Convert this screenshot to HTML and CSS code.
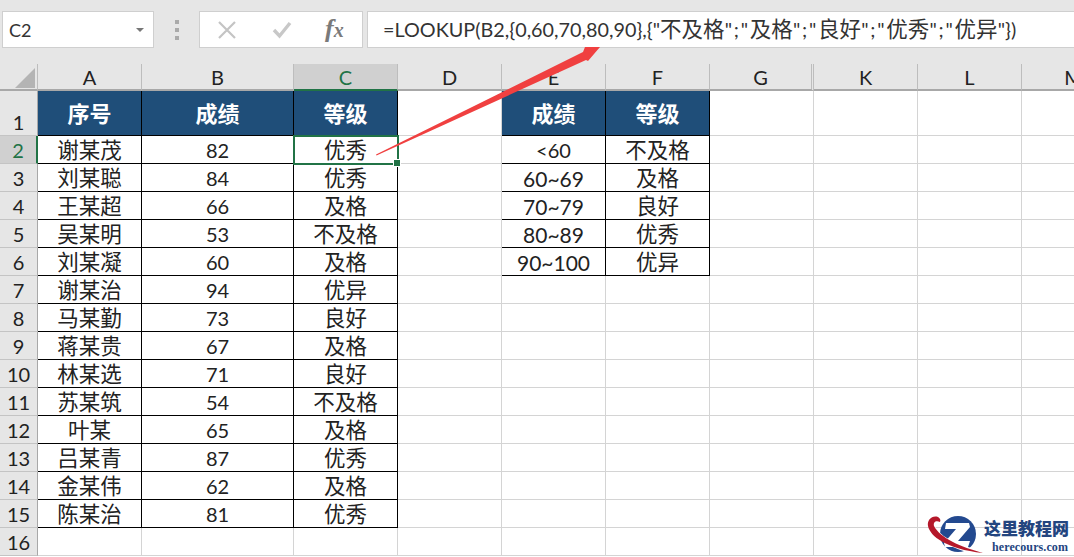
FILE: index.html
```html
<!DOCTYPE html>
<html lang="zh">
<head>
<meta charset="utf-8">
<title>LOOKUP</title>
<link rel="stylesheet" href="styles.css">
</head>
<body>
<div class="bar">
  <div class="namebox"><span>C2</span><i class="caret"></i></div>
  <div class="grip"><i></i><i></i><i></i></div>
  <div class="fx">
    <svg class="ic" width="18" height="18" viewBox="0 0 18 18"><path d="M1 1 L17 17 M17 1 L1 17" stroke="#c4c4c4" stroke-width="2.2" fill="none"/></svg>
    <svg class="ic" width="20" height="18" viewBox="0 0 20 18"><path d="M2 9 L7.5 15 L18 2" stroke="#c8c8c8" stroke-width="3.4" fill="none"/></svg>
    <span class="fxt">f<span class="fxx">x</span></span>
  </div>
  <div class="formula">=LOOKUP(B2,{0,60,70,80,90},{"<span class="cj">不及格</span><span class="sep">";"</span><span class="cj">及格</span><span class="sep">";"</span><span class="cj">良好</span><span class="sep">";"</span><span class="cj">优秀</span><span class="sep">";"</span><span class="cj">优异</span>"})</div>
</div>
<table class="sheet">
  <colgroup><col class="w0"><col class="w1"><col class="w2"><col class="w1"><col class="w1"><col class="w1"><col class="w1"><col class="w1"><col class="w1"><col class="w1"><col class="w1"></colgroup>
  <tr class="heads"><th class="corner"><svg width="20" height="20" viewBox="0 0 20 20"><path d="M20 0 V20 H0 Z" fill="#b4b4b4"/></svg></th><th>A</th><th>B</th><th class="sel">C</th><th>D</th><th>E</th><th>F</th><th class="dbl">G</th><th>K</th><th>L</th><th>M</th></tr>
  <tr class="r1"><th class="rh">1</th><td class="h">序号</td><td class="h">成绩</td><td class="h">等级</td><td></td><td class="h">成绩</td><td class="h">等级</td><td></td><td></td><td></td><td></td></tr>
  <tr><th class="rh rsel">2</th><td class="b">谢某茂</td><td class="b n">82</td><td class="b active">优秀<i class="handle"></i></td><td></td><td class="b n">&lt;60</td><td class="b">不及格</td><td></td><td></td><td></td><td></td></tr>
  <tr><th class="rh">3</th><td class="b">刘某聪</td><td class="b n">84</td><td class="b">优秀</td><td></td><td class="b n wide">60~69</td><td class="b">及格</td><td></td><td></td><td></td><td></td></tr>
  <tr><th class="rh">4</th><td class="b">王某超</td><td class="b n">66</td><td class="b">及格</td><td></td><td class="b n wide">70~79</td><td class="b">良好</td><td></td><td></td><td></td><td></td></tr>
  <tr><th class="rh">5</th><td class="b">吴某明</td><td class="b n">53</td><td class="b">不及格</td><td></td><td class="b n wide">80~89</td><td class="b">优秀</td><td></td><td></td><td></td><td></td></tr>
  <tr><th class="rh">6</th><td class="b">刘某凝</td><td class="b n">60</td><td class="b">及格</td><td></td><td class="b n wide">90~100</td><td class="b">优异</td><td></td><td></td><td></td><td></td></tr>
  <tr><th class="rh">7</th><td class="b">谢某治</td><td class="b n">94</td><td class="b">优异</td><td></td><td></td><td></td><td></td><td></td><td></td><td></td></tr>
  <tr><th class="rh">8</th><td class="b">马某勤</td><td class="b n">73</td><td class="b">良好</td><td></td><td></td><td></td><td></td><td></td><td></td><td></td></tr>
  <tr><th class="rh">9</th><td class="b">蒋某贵</td><td class="b n">67</td><td class="b">及格</td><td></td><td></td><td></td><td></td><td></td><td></td><td></td></tr>
  <tr><th class="rh">10</th><td class="b">林某选</td><td class="b n">71</td><td class="b">良好</td><td></td><td></td><td></td><td></td><td></td><td></td><td></td></tr>
  <tr><th class="rh">11</th><td class="b">苏某筑</td><td class="b n">54</td><td class="b">不及格</td><td></td><td></td><td></td><td></td><td></td><td></td><td></td></tr>
  <tr><th class="rh">12</th><td class="b">叶某</td><td class="b n">65</td><td class="b">及格</td><td></td><td></td><td></td><td></td><td></td><td></td><td></td></tr>
  <tr><th class="rh">13</th><td class="b">吕某青</td><td class="b n">87</td><td class="b">优秀</td><td></td><td></td><td></td><td></td><td></td><td></td><td></td></tr>
  <tr><th class="rh">14</th><td class="b">金某伟</td><td class="b n">62</td><td class="b">及格</td><td></td><td></td><td></td><td></td><td></td><td></td><td></td></tr>
  <tr><th class="rh">15</th><td class="b">陈某治</td><td class="b n">81</td><td class="b">优秀</td><td></td><td></td><td></td><td></td><td></td><td></td><td></td></tr>
  <tr><th class="rh">16</th><td></td><td></td><td></td><td></td><td></td><td></td><td></td><td></td><td></td><td></td></tr>
</table>
<svg class="arrow" width="1074" height="557" viewBox="0 0 1074 557"><path d="M376 154.5 L583 52 L585 47 L600 47 L588 61 L586 60 L376.5 155.5 Z" fill="#f04040"/></svg>
<div class="mark">
  <svg width="58" height="43" viewBox="0 0 58 43">
    <circle cx="32" cy="20" r="18" fill="#23498f"/>
    <path d="M5 10 C10 24 30 34 52 38" stroke="#fff" stroke-width="5" fill="none"/>
    <path d="M20 9 H43 L44 13 L32 27 H44 L42 33 H19 L18 29 L30 15 H19 Z" fill="#fff"/>
    <path d="M12 3 C6 1 1 6 2 12 C4 22 20 35 57 39 C35 33 14 24 8 12 C7 8 10 6 14 8 C15 6 14 4 12 3 Z" fill="#b5182a"/>
  </svg>
  <div class="marktext"><div class="cn">这里教程网</div><div class="en">herecours.com</div></div>
</div>
</body>
</html>
```
FILE: styles.css
```css
html, body { margin: 0; padding: 0; }
body { width: 1074px; height: 557px; overflow: hidden; position: relative; background: #fff; font-family: Lato, "Noto Sans CJK SC", sans-serif; color: #222; }
.bar { height: 64px; box-sizing: border-box; background: #e6e6e6; display: flex; padding: 11px 0 0 2px; align-items: flex-start; }
.namebox { width: 152px; height: 37px; box-sizing: border-box; background: #fff; border: 1px solid #cfcfcf; display: flex; align-items: center; justify-content: space-between; padding: 0 9px 0 6px; font-size: 18px; color: #333; }
.caret { width: 0; height: 0; border-left: 4px solid transparent; border-right: 4px solid transparent; border-top: 4px solid #777; }
.grip { width: 45px; height: 37px; display: flex; flex-direction: column; align-items: center; justify-content: center; gap: 4px; }
.grip i { width: 4px; height: 4px; background: #aaa; }
.fx { width: 164px; height: 37px; box-sizing: border-box; background: #fff; border: 1px solid #cfcfcf; display: flex; align-items: center; padding-left: 18px; gap: 36px; }
.ic { display: block; flex: none; }
.fxt { font-family: "Liberation Serif", serif; font-style: italic; font-weight: bold; font-size: 26px; line-height: 30px; color: #7a7a7a; margin-left: -3px; }
.fxx { font-size: 20px; }
.formula { margin-left: 4px; flex: 1; height: 37px; box-sizing: border-box; background: #fff; border: 1px solid #cfcfcf; border-right: 0; padding-left: 15px; line-height: 34px; font-size: 19.8px; color: #333; white-space: nowrap; }
.cj { font-size: 21.5px; }
.sep { letter-spacing: 1.8px; }
.sheet { border-collapse: separate; border-spacing: 0; table-layout: fixed; width: 1126px; }
.w0 { width: 38px; } .w1 { width: 104px; } .w2 { width: 152px; }
.sheet th, .sheet td { box-sizing: border-box; padding: 0; height: 28px; border-right: 1px solid #d4d4d4; border-bottom: 1px solid #d4d4d4; text-align: center; vertical-align: middle; font-size: 20px; font-weight: normal; line-height: 25px; }
.sheet .heads th { height: 27px; line-height: 24px; background: #e6e6e6; border-bottom: 2px solid #a8a8a8; border-right: 1px solid #bdbdbd; color: #222; }
.sheet .heads .sel { background: #d0d0d0; color: #217346; border-bottom-color: #217346; }
.corner svg { display: block; margin: 3px 0 0 15px; }
.sheet .heads .dbl { border-right: 3px double #bdbdbd; }
.sheet .rh { background: #e6e6e6; color: #222; border-bottom: 1px solid #c4c4c4; border-right: 1px solid #a8a8a8; padding-top: 2px; }
.sheet .rsel { background: #d0d0d0; color: #217346; border-right: 2px solid #217346; }
.sheet .r1 th, .sheet .r1 td { height: 45px; }
.sheet .r1 .rh { vertical-align: bottom; }
.sheet .h { background: #1f4e79; color: #fff; font-size: 22px; font-weight: bold; border-right: 1px solid #000; border-bottom: 1px solid #000; }
.sheet .b { border-right: 1px solid #000; border-bottom: 1px solid #000; color: #222; font-size: 21.5px; padding-top: 2px; }
.sheet .n { font-size: 20px; color: #222; }
.sheet .wide { font-size: 21px; }
.sheet .active { position: relative; outline: 2px solid #217346; outline-offset: -1px; }
.handle { position: absolute; right: -4px; bottom: -4px; width: 8px; height: 8px; background: #217346; border: 1px solid #fff; box-sizing: border-box; }
.arrow { position: absolute; left: 0; top: 0; pointer-events: none; }
.mark { position: absolute; left: 926px; top: 514px; display: flex; align-items: flex-start; }
.cn { font-family: "Noto Sans CJK SC", sans-serif; font-weight: 900; font-size: 17px; line-height: 20px; color: #23457f; white-space: nowrap; margin-top: 4px; }
.en { font-family: "Liberation Serif", serif; font-weight: bold; font-size: 12px; line-height: 14px; color: #23457f; white-space: nowrap; padding-left: 8px; letter-spacing: .1px; margin-top: 2px; }
```
